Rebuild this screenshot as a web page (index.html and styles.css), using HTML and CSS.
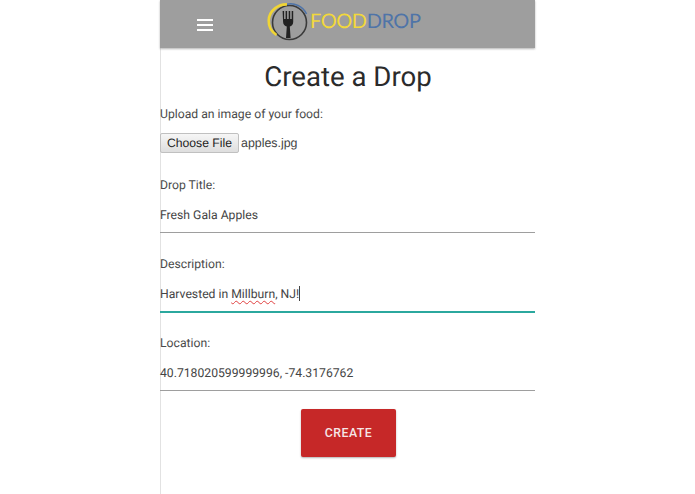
FILE: index.html
```html
<!DOCTYPE html>
<html lang="en">
<head>
<meta charset="utf-8">
<title>Create a Drop</title>
<link rel="stylesheet" href="styles.css">
</head>
<body>
<div class="phone">
  <header class="bar">
    <div class="menu"><span></span><span></span><span></span></div>
    <div class="logo">
      <svg class="mark" width="44" height="40" viewBox="0 0 44 40">
        <circle cx="22.5" cy="21.5" r="17" fill="none" stroke="#3a3a3a" stroke-width="1.6"/>
        <path d="M20 3.4C12 3 2 9 1.7 19.5C1.5 26 5 31 9.5 34" fill="none" stroke="#f0d535" stroke-width="2.6"/>
        <path d="M20 3.2C27 1.5 36 5 39.5 13" fill="none" stroke="#4f74a8" stroke-width="1.6"/>
        <path d="M15.6 10h1.5v8h1.5v-8h1.5v8h1.6v-8h1.5v8h1.5v-8h1.5v11c0 2.6-1.6 4-3.4 4.6l.8 11.4h-4.6l.8-11.4c-1.9-.6-3.7-2-3.7-4.6z" fill="#222"/>
      </svg>
      <div class="word"><span class="food">FOOD</span><span class="drop">DROP</span></div>
    </div>
  </header>
  <main class="content">
    <h1 class="title">Create a Drop</h1>
    <p class="label first">Upload an image of your food:</p>
    <div class="file"><span class="file-btn">Choose File</span><span class="file-name">apples.jpg</span></div>
    <p class="label">Drop Title:</p>
    <div class="field">Fresh Gala Apples</div>
    <p class="label">Description:</p>
    <div class="field active">Harvested in <span class="typo">Millburn</span>, NJ!<span class="caret"></span></div>
    <p class="label">Location:</p>
    <div class="field">40.718020599999996, -74.3176762</div>
    <div class="actions"><button class="create">CREATE</button></div>
  </main>
</div>
</body>
</html>
```
FILE: styles.css
```css
* { box-sizing: border-box; }
html, body { margin: 0; height: 100%; background: #fff; overflow: hidden; }
body { font-family: Roboto, sans-serif; color: #444; text-rendering: geometricPrecision; }
.phone { width: 375px; height: 494px; margin-left: 160px; border-left: 1px solid #e2e2e2; }
.bar {
  height: 48px; margin-left: -1px; background: #9e9e9e; display: flex; align-items: center;
  box-shadow: 0 1px 2px rgba(0,0,0,.3); padding-left: 37px;
}
.menu { width: 16px; display: flex; flex-direction: column; gap: 3px; margin-top: 1px; }
.menu span { display: block; height: 2px; background: #fff; }
.logo { display: flex; align-items: center; margin-left: 54px; margin-top: -7px; }
.mark { display: block; flex: none; margin-top: 1px; }
.word { font-family: Lato, sans-serif; font-weight: 400; font-size: 20px; line-height: 28px; margin-left: -1px; letter-spacing: -.45px; }
.food { color: #f2d83a; }
.drop { color: #4f74a8; }
.content { margin-left: -1px; }
.title { margin: 0; padding-top: 12px; text-align: center; font-weight: 400; font-size: 27.6px; line-height: 34px; color: #2b2b2b; padding-left: 1px; }
.label { margin: 0; font-size: 12.2px; line-height: 16px; color: #4a4a4a; padding-top: 23px; }
.label.first { padding-top: 12px; }
.file { display: flex; align-items: center; margin-top: 11px; margin-bottom: 1px; height: 20px; }
.file-btn {
  width: 79px; height: 20px; background: linear-gradient(#f6f6f6, #dedede); border: 1px solid #c0c0c0; border-radius: 2px;
  font-family: "Liberation Sans", sans-serif; font-size: 12.2px; line-height: 18px; text-align: center; color: #222;
}
.file-name { margin-left: 2px; font-size: 12.4px; color: #444; font-family: "Liberation Sans", sans-serif; }
.field { height: 40px; border-bottom: 1px solid #9e9e9e; font-size: 12.2px; line-height: 16px; padding-top: 14px; color: #444; }
.field.active { height: 41px; margin-bottom: -1px; border-bottom: 2px solid #2ba89e; }
.typo { text-decoration: underline wavy #e04040 1px; text-underline-offset: 2px; }
.caret { display: inline-block; width: 1px; height: 15px; background: #444; vertical-align: -3px; }
.actions { display: flex; justify-content: center; padding-top: 18px; padding-left: 2px; }
.create {
  width: 95px; height: 48px; border: 0; border-radius: 2px; background: #c62828; color: #f5e6e6;
  font-family: Roboto, sans-serif; font-size: 12.3px; font-weight: 500; letter-spacing: .5px;
  box-shadow: 0 1px 2px rgba(0,0,0,.3);
}
```
